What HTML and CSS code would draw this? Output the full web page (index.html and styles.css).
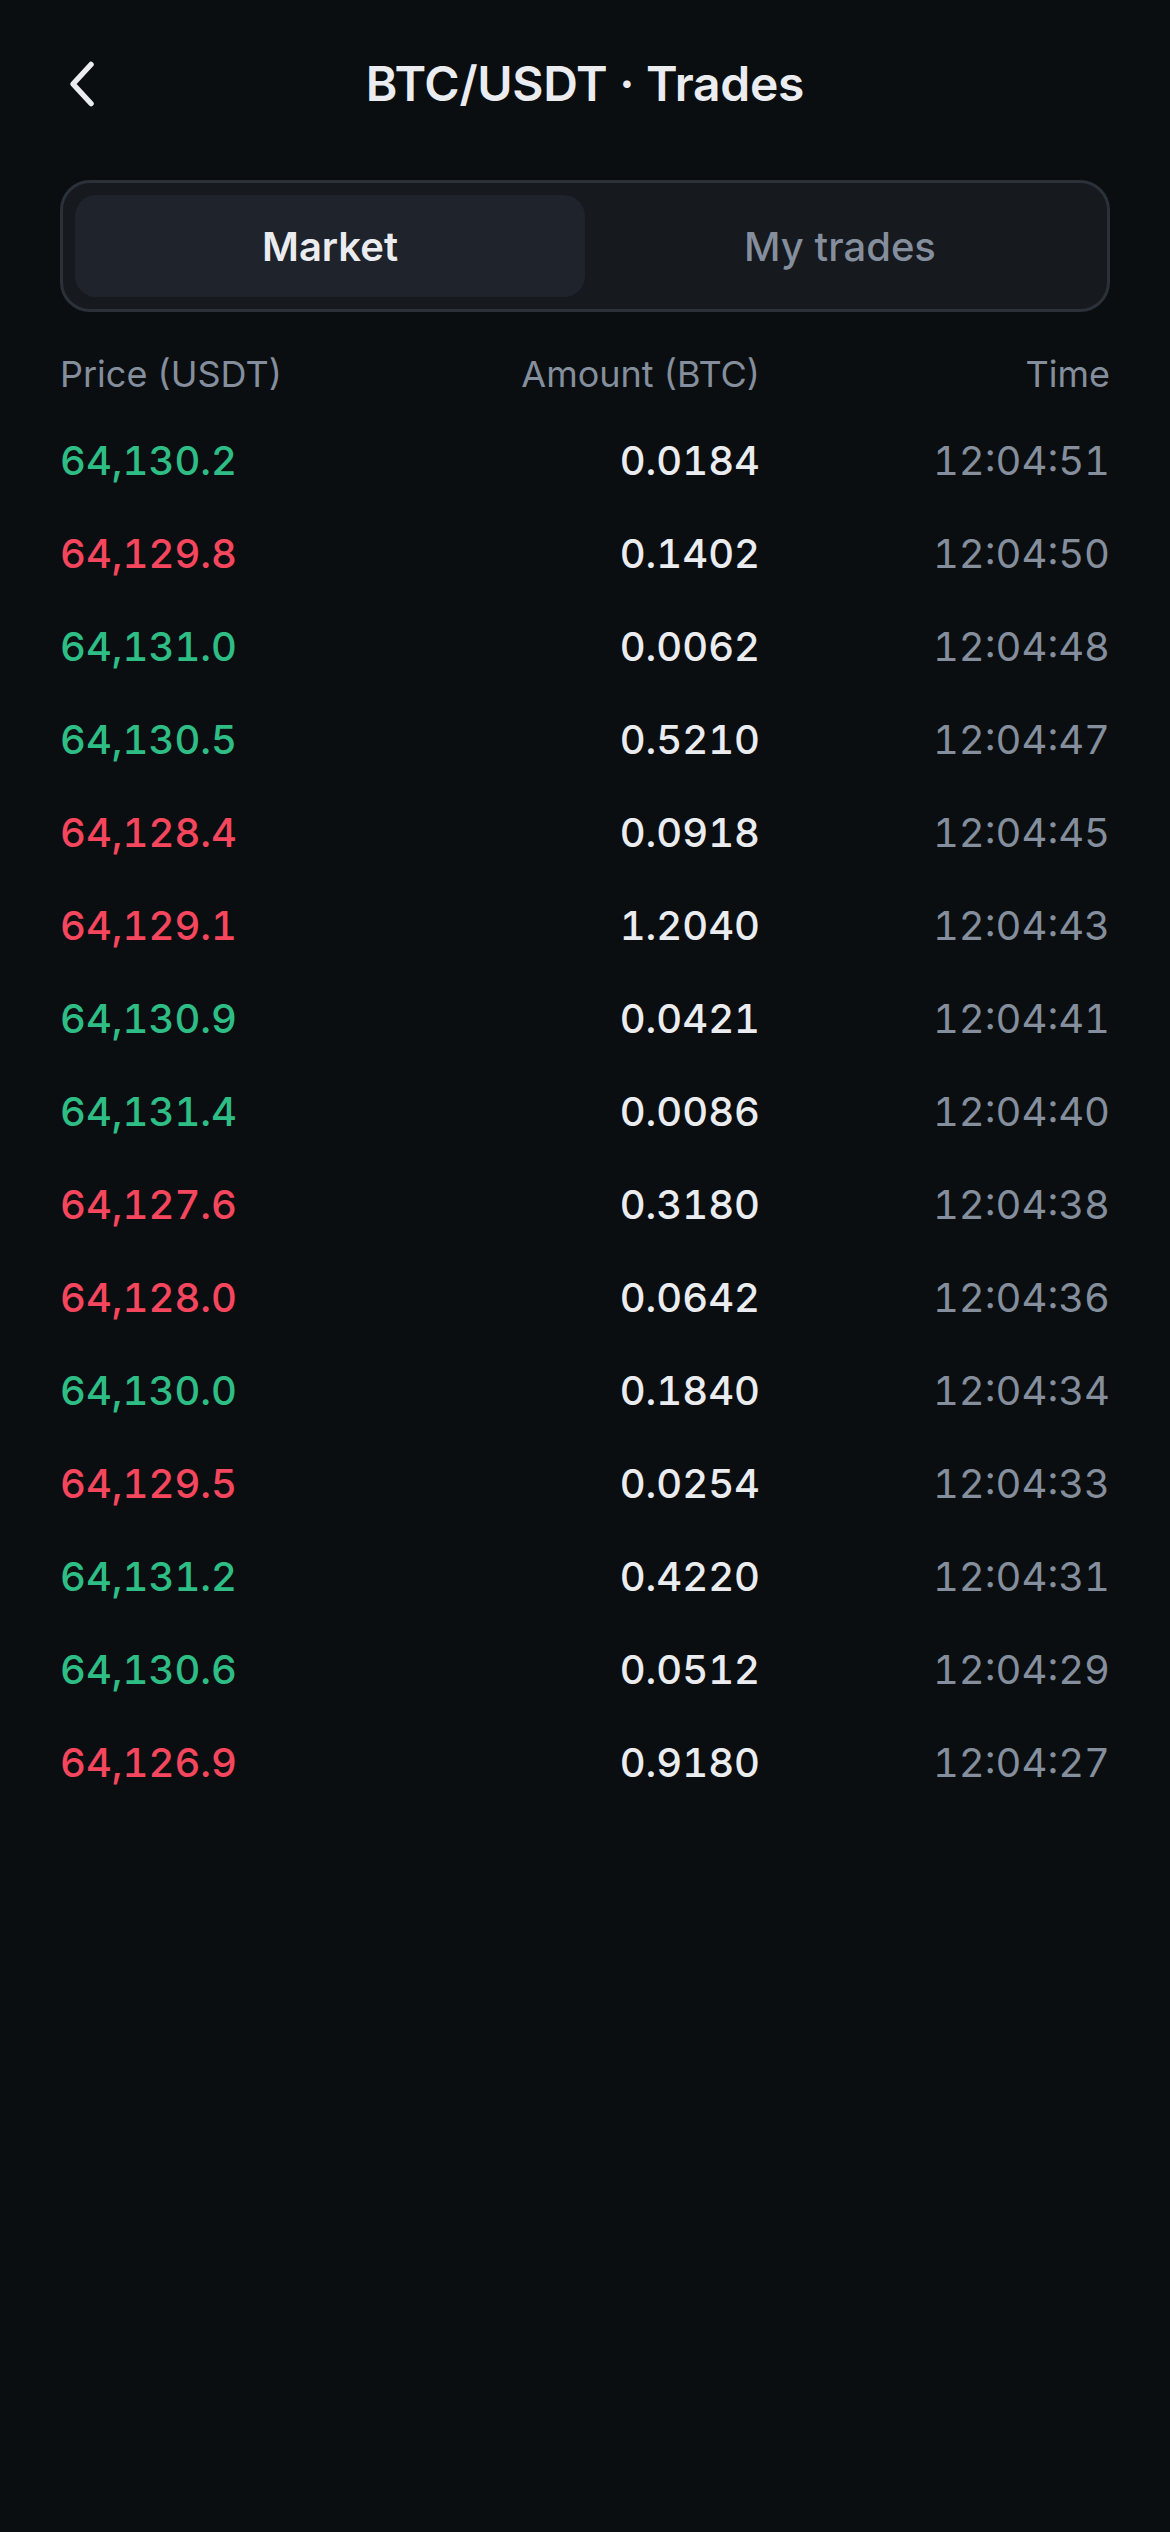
FILE: index.html
```html
<!DOCTYPE html>
<html lang="en">
<head>
    <meta charset="UTF-8">
    <meta name="viewport" content="width=device-width, initial-scale=1.0">
    <title>BTC/USDT · Trades</title>
    <link rel="stylesheet" href="styles.css">
</head>
<body>
    <div class="screen">
        <header class="topbar">
            <button class="back" aria-label="Back">
                <svg viewBox="0 0 30 48" width="30" height="48">
                    <path d="M22 4.5 L4 24 L22 43.5" fill="none" stroke="#eaecef" stroke-width="5.5" stroke-linecap="round" stroke-linejoin="round"/>
                </svg>
            </button>
            <h1>BTC/USDT · Trades</h1>
        </header>

        <div class="tabs">
            <button class="tab active">Market</button>
            <button class="tab">My trades</button>
        </div>

        <div class="trades">
            <div class="row head">
                <span>Price (USDT)</span>
                <span>Amount (BTC)</span>
                <span>Time</span>
            </div>
            <div class="row"><span class="price up">64,130.2</span><span class="amount">0.0184</span><span class="time">12:04:51</span></div>
            <div class="row"><span class="price down">64,129.8</span><span class="amount">0.1402</span><span class="time">12:04:50</span></div>
            <div class="row"><span class="price up">64,131.0</span><span class="amount">0.0062</span><span class="time">12:04:48</span></div>
            <div class="row"><span class="price up">64,130.5</span><span class="amount">0.5210</span><span class="time">12:04:47</span></div>
            <div class="row"><span class="price down">64,128.4</span><span class="amount">0.0918</span><span class="time">12:04:45</span></div>
            <div class="row"><span class="price down">64,129.1</span><span class="amount">1.2040</span><span class="time">12:04:43</span></div>
            <div class="row"><span class="price up">64,130.9</span><span class="amount">0.0421</span><span class="time">12:04:41</span></div>
            <div class="row"><span class="price up">64,131.4</span><span class="amount">0.0086</span><span class="time">12:04:40</span></div>
            <div class="row"><span class="price down">64,127.6</span><span class="amount">0.3180</span><span class="time">12:04:38</span></div>
            <div class="row"><span class="price down">64,128.0</span><span class="amount">0.0642</span><span class="time">12:04:36</span></div>
            <div class="row"><span class="price up">64,130.0</span><span class="amount">0.1840</span><span class="time">12:04:34</span></div>
            <div class="row"><span class="price down">64,129.5</span><span class="amount">0.0254</span><span class="time">12:04:33</span></div>
            <div class="row"><span class="price up">64,131.2</span><span class="amount">0.4220</span><span class="time">12:04:31</span></div>
            <div class="row"><span class="price up">64,130.6</span><span class="amount">0.0512</span><span class="time">12:04:29</span></div>
            <div class="row"><span class="price down">64,126.9</span><span class="amount">0.9180</span><span class="time">12:04:27</span></div>
        </div>
    </div>
</body>
</html>
```

FILE: styles.css
```css
html, body {
    margin: 0;
    padding: 0;
    background-color: #0b0e11;
}
body {
    font-family: Inter, 'Noto Sans', 'Liberation Sans', sans-serif;
    color: #eaecef;
    min-height: 2532px;
}
.screen {
    padding: 0 60px;
}
.topbar {
    position: relative;
    height: 168px;
    display: flex;
    align-items: center;
    justify-content: center;
}
.back {
    position: absolute;
    left: 0;
    top: 60px;
    width: 48px;
    height: 48px;
    padding: 0;
    border: none;
    background: none;
    display: flex;
    align-items: center;
    justify-content: center;
}
.topbar h1 {
    margin: 0;
    font-size: 48px;
    font-weight: 600;
    letter-spacing: -0.3px;
    line-height: 1;
    color: #eaecef;
}
.tabs {
    margin-top: 12px;
    display: grid;
    grid-template-columns: 1fr 1fr;
    padding: 12px;
    background-color: #16191e;
    border: 3px solid #2b3139;
    border-radius: 30px;
}
.tab {
    height: 102px;
    border: none;
    border-radius: 21px;
    background: none;
    font-family: inherit;
    font-size: 40px;
    font-weight: 500;
    color: #848e9c;
    padding: 0;
}
.tab.active {
    background-color: #1f232b;
    color: #eaecef;
    font-weight: 600;
}
.trades {
    margin-top: 40px;
}
.row {
    display: grid;
    grid-template-columns: 1fr 1fr 1fr;
    align-items: center;
    height: 93px;
    font-size: 40px;
    font-weight: 500;
    font-variant-numeric: tabular-nums;
}
.row span:nth-child(2),
.row span:nth-child(3) {
    text-align: right;
}
.row.head {
    height: 36px;
    margin-bottom: 26px;
    font-size: 36px;
    font-weight: 400;
    color: #848e9c;
    font-variant-numeric: normal;
}
.up {
    color: #2ebd85;
}
.down {
    color: #f6465d;
}
.amount {
    color: #eaecef;
}
.time {
    color: #848e9c;
    font-weight: 400;
}
```
